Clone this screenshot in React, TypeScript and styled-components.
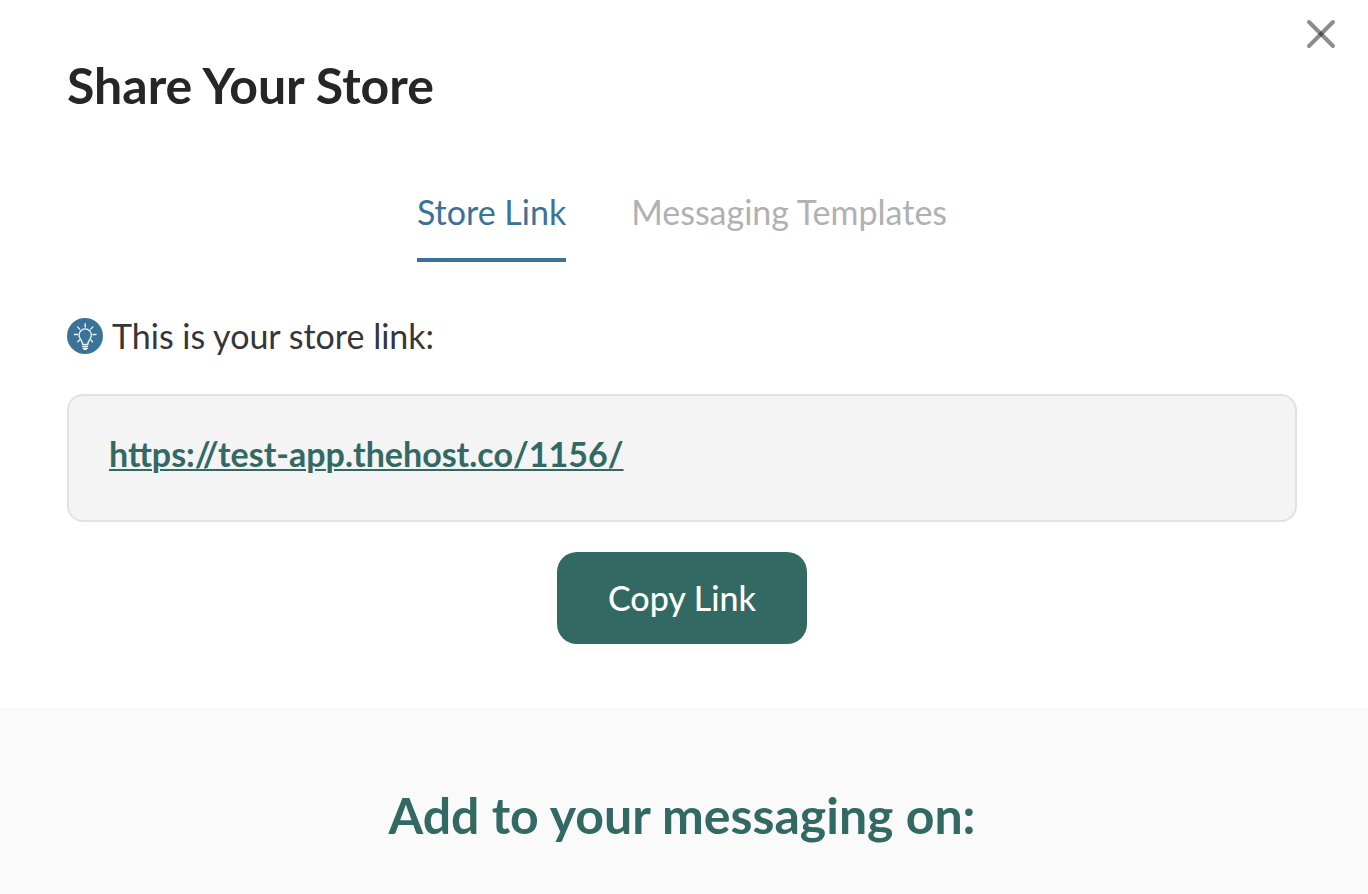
import React, { useState } from "react";
import styled, { createGlobalStyle } from "styled-components";

const GlobalStyle = createGlobalStyle`
  *, *::before, *::after { box-sizing: border-box; }
  body {
    margin: 0;
    background: #fff;
    color: #363638;
    font-family: Lato, "Open Sans", sans-serif;
    font-size: 34px;
    line-height: 40px;
  }
`;

const Modal = styled.main`
  position: relative;
  display: flex;
  flex-direction: column;
  min-height: 100vh;
`;

const CloseButton = styled.button`
  position: absolute;
  top: 18px;
  right: 31px;
  display: flex;
  padding: 0;
  border: 0;
  background: none;
  cursor: pointer;
`;

const Content = styled.section`
  display: flex;
  flex-direction: column;
  padding: 60px 71px 64px 67px;
`;

const Title = styled.h1`
  margin: 0;
  color: #262528;
  font-size: 50px;
  font-weight: 700;
  line-height: 50px;
`;

const Tabs = styled.div`
  display: flex;
  justify-content: center;
  gap: 65px;
  margin-top: 82px;
`;

const Tab = styled.button<{ $active: boolean }>`
  padding: 0 0 26px;
  border: 0;
  border-bottom: 4px solid ${(p) => (p.$active ? "#3a7298" : "transparent")};
  background: none;
  color: ${(p) => (p.$active ? "#3a7298" : "#b0b0b5")};
  font: inherit;
  cursor: pointer;
`;

const Hint = styled.p`
  display: flex;
  align-items: center;
  gap: 9px;
  margin: 54px 0 0;
`;

const LinkBox = styled.div`
  margin-top: 38px;
  padding: 38px 40px 46px;
  border: 2px solid #e2e2e6;
  border-radius: 16px;
  background: #f4f4f4;
`;

const StoreUrl = styled.a`
  color: #326a63;
  font-weight: 700;
  text-decoration-thickness: 2px;
  text-underline-offset: 2px;
`;

const CopyButton = styled.button`
  align-self: center;
  margin-top: 30px;
  padding: 26px 50px;
  min-width: 250px;
  border: 0;
  border-radius: 20px;
  background: #326a63;
  color: #fff;
  font: inherit;
  font-weight: 500;
  cursor: pointer;
`;

const Messaging = styled.section`
  flex: 1;
  padding: 82px 71px 54px 67px;
  background: #fafafa;
`;

const MessagingTitle = styled.h2`
  margin: 0;
  color: #326a63;
  font-size: 50px;
  font-weight: 700;
  line-height: 50px;
  text-align: center;
`;

function CloseIcon() {
  return (
    <svg width="32" height="32" viewBox="0 0 32 32" stroke="#111" strokeOpacity="0.48" strokeWidth="4" strokeLinecap="round" aria-hidden="true">
      <line x1="4" y1="4" x2="28" y2="28" />
      <line x1="28" y1="4" x2="4" y2="28" />
    </svg>
  );
}

function BulbIcon() {
  return (
    <svg width="36" height="36" viewBox="0 0 36 36" fill="none" aria-hidden="true">
      <circle cx="18" cy="18" r="18" fill="#3a7298" />
      <g stroke="#eef4f7" strokeWidth="1.4" strokeLinecap="round" strokeLinejoin="round">
        <path d="M15.6 26.5c0-2.2-.9-3.6-2-5.1-1-1.3-1.6-2.6-1.6-4.3a6.2 6.2 0 0 1 12.4 0c0 1.7-.6 3-1.6 4.3-1.1 1.5-2 2.9-2 5.1z" />
        <path d="M18.2 5.7v3.4M7.4 16.5h3M26 16.5h3M10.6 8.9l2 2.2M25.8 8.9l-2 2.2M10.9 23.8l1.6-1.7M25.5 23.8l-1.6-1.7" />
        <path d="M15.8 28.4h4.8M16.2 30.2h4M17.2 31.4h2" />
      </g>
    </svg>
  );
}

const tabs = ["Store Link", "Messaging Templates"];
const storeUrl = "https://test-app.thehost.co/1156/";

export default function App() {
  const [active, setActive] = useState(tabs[0]);
  return (
    <>
      <GlobalStyle />
      <Modal>
        <CloseButton type="button" aria-label="Close">
          <CloseIcon />
        </CloseButton>
        <Content>
          <Title>Share Your Store</Title>
          <Tabs role="tablist">
            {tabs.map((name) => (
              <Tab
                key={name}
                type="button"
                role="tab"
                aria-selected={name === active}
                $active={name === active}
                onClick={() => setActive(name)}
              >
                {name}
              </Tab>
            ))}
          </Tabs>
          <Hint>
            <BulbIcon />
            This is your store link:
          </Hint>
          <LinkBox>
            <StoreUrl href={storeUrl}>{storeUrl}</StoreUrl>
          </LinkBox>
          <CopyButton type="button" onClick={() => navigator.clipboard?.writeText(storeUrl)}>
            Copy Link
          </CopyButton>
        </Content>
        <Messaging>
          <MessagingTitle>Add to your messaging on:</MessagingTitle>
        </Messaging>
      </Modal>
    </>
  );
}
